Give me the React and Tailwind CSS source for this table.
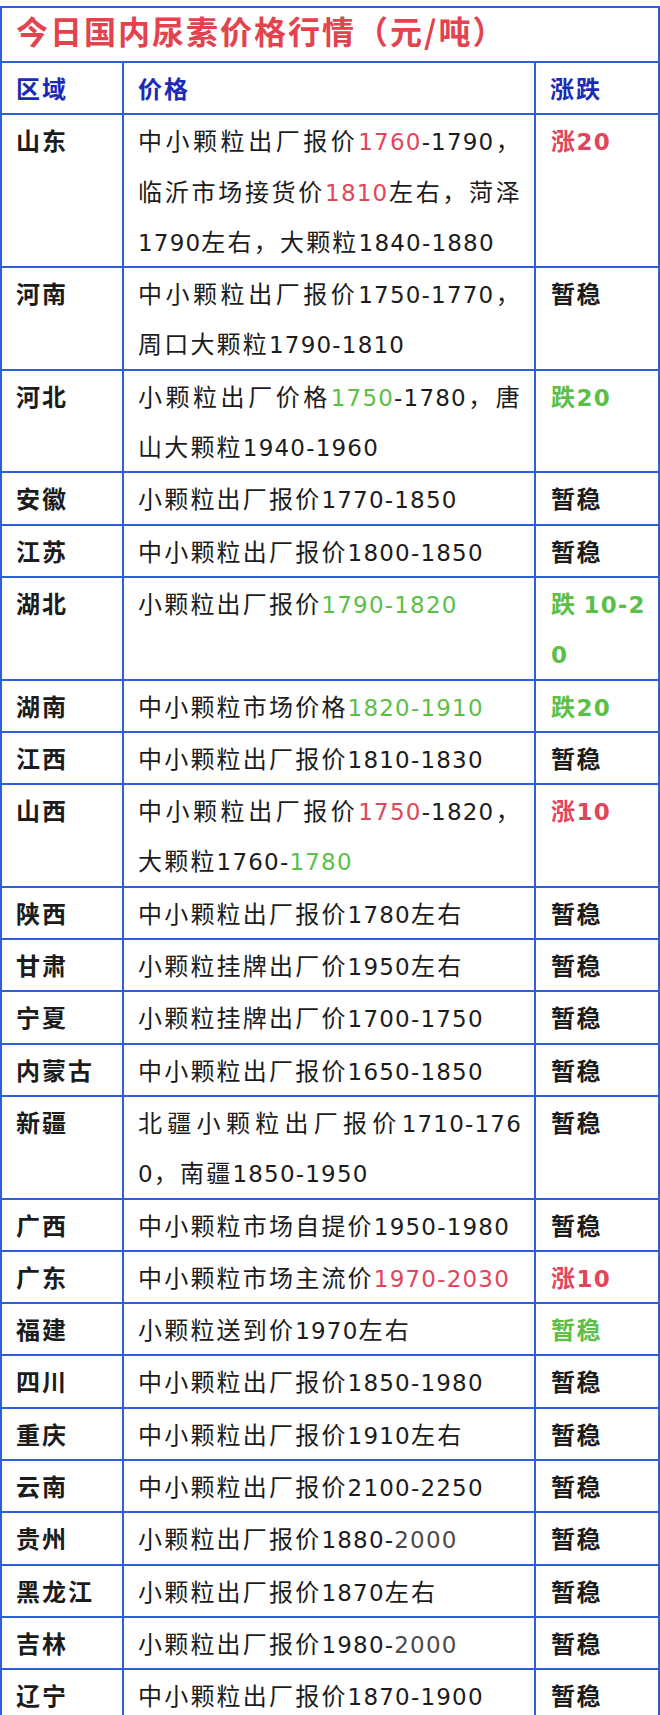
// 今日国内尿素价格行情表

const R = 'r';
const G = 'g';
const D = 'd';

const ROWS = [
  {
    area: '山东',
    lines: [
      ['中小颗粒出厂报价', [R, '1760'], '-1790，'],
      ['临沂市场接货价', [R, '1810'], '左右，菏泽'],
      ['1790左右，大颗粒1840-1880'],
    ],
    change: ['涨20'],
    tone: R,
  },
  {
    area: '河南',
    lines: [['中小颗粒出厂报价1750-1770，'], ['周口大颗粒1790-1810']],
    change: ['暂稳'],
  },
  {
    area: '河北',
    lines: [['小颗粒出厂价格', [G, '1750'], '-1780，唐'], ['山大颗粒1940-1960']],
    change: ['跌20'],
    tone: G,
  },
  { area: '安徽', lines: [['小颗粒出厂报价1770-1850']], change: ['暂稳'] },
  { area: '江苏', lines: [['中小颗粒出厂报价1800-1850']], change: ['暂稳'] },
  {
    area: '湖北',
    lines: [['小颗粒出厂报价', [G, '1790-1820']], ['']],
    change: ['跌 10-2', '0'],
    tone: G,
  },
  { area: '湖南', lines: [['中小颗粒市场价格', [G, '1820-1910']]], change: ['跌20'], tone: G },
  { area: '江西', lines: [['中小颗粒出厂报价1810-1830']], change: ['暂稳'] },
  {
    area: '山西',
    lines: [['中小颗粒出厂报价', [R, '1750'], '-1820，'], ['大颗粒1760-', [G, '1780']]],
    change: ['涨10'],
    tone: R,
  },
  { area: '陕西', lines: [['中小颗粒出厂报价1780左右']], change: ['暂稳'] },
  { area: '甘肃', lines: [['小颗粒挂牌出厂价1950左右']], change: ['暂稳'] },
  { area: '宁夏', lines: [['小颗粒挂牌出厂价1700-1750']], change: ['暂稳'] },
  { area: '内蒙古', lines: [['中小颗粒出厂报价1650-1850']], change: ['暂稳'] },
  {
    area: '新疆',
    lines: [['北疆小颗粒出厂报价1710-176'], ['0，南疆1850-1950']],
    change: ['暂稳'],
  },
  { area: '广西', lines: [['中小颗粒市场自提价1950-1980']], change: ['暂稳'] },
  { area: '广东', lines: [['中小颗粒市场主流价', [R, '1970-2030']]], change: ['涨10'], tone: R },
  { area: '福建', lines: [['小颗粒送到价1970左右']], change: ['暂稳'], tone: G },
  { area: '四川', lines: [['中小颗粒出厂报价1850-1980']], change: ['暂稳'] },
  { area: '重庆', lines: [['中小颗粒出厂报价1910左右']], change: ['暂稳'] },
  { area: '云南', lines: [['中小颗粒出厂报价2100-2250']], change: ['暂稳'] },
  { area: '贵州', lines: [['小颗粒出厂报价1880-', [D, '2000']]], change: ['暂稳'] },
  { area: '黑龙江', lines: [['小颗粒出厂报价1870左右']], change: ['暂稳'] },
  { area: '吉林', lines: [['小颗粒出厂报价1980-', [D, '2000']]], change: ['暂稳'] },
  { area: '辽宁', lines: [['中小颗粒出厂报价1870-1900']], change: ['暂稳'] },
];

const TONE = {
  r: 'text-[#e2455a]',
  g: 'text-[#5cbf48]',
  d: 'text-[#4a4a4a]',
};

// 숫자 구간은 폭이 넓은 글꼴로
function Digits({ text }) {
  return text.split(/([0-9-]+)/).map((s, i) =>
    /^[0-9-]+$/.test(s) ? (
      <span key={i} className="font-['DejaVu_Sans',sans-serif] text-[23px] leading-none tracking-[1.2px]">
        {s}
      </span>
    ) : (
      <span key={i}>{s}</span>
    )
  );
}

function Line({ parts, justify }) {
  const empty = parts.length === 1 && parts[0] === '';
  return (
    <div className={justify ? 'text-justify [text-align-last:justify]' : ''}>
      {parts.map((p, i) =>
        Array.isArray(p) ? (
          <span key={i} className={TONE[p[0]]}>
            <Digits text={p[1]} />
          </span>
        ) : (
          <Digits key={i} text={p} />
        )
      )}
      {empty ? '\u00a0' : null}
    </div>
  );
}

export default function App() {
  return (
    <div
      className="h-[1715px] w-[660px] overflow-hidden bg-white pt-[6px]"
      style={{ fontFamily: '"Noto Sans CJK SC", "Noto Sans", sans-serif' }}
    >
      <div className="w-[660px] border-x-2 border-t-2 border-[#2d5fd8]">
        <div className="border-b-2 border-[#2d5fd8] pb-2 pl-[14px] text-[32px] font-bold leading-[45px] tracking-[2px] text-[#e3434f]">
          今日国内尿素价格行情（元/吨）
        </div>
        <div className="grid grid-cols-[122px_412px_1fr] border-b-2 border-[#2d5fd8] text-[24px] font-bold leading-[50.3px] tracking-[2px] text-[#1b2bb8]">
          <div className="border-r-2 border-[#2d5fd8] pl-[14px]">区域</div>
          <div className="border-r-2 border-[#2d5fd8] pl-[14px]">价格</div>
          <div className="pl-[14px]">涨跌</div>
        </div>
        {ROWS.map((row, i) => (
          <div
            key={i}
            className="grid grid-cols-[122px_412px_1fr] border-b-2 border-[#2d5fd8] text-[24px] leading-[50.3px] text-[#1c1c1c]"
          >
            <div className="border-r-2 border-[#2d5fd8] pl-[14px] font-bold tracking-[2px]">{row.area}</div>
            <div className="border-r-2 border-[#2d5fd8] pl-[14px] pr-[12px] tracking-[2.2px]">
              {row.lines.map((parts, j) => {
                const next = row.lines[j + 1];
                const justify = !!next && !(next.length === 1 && next[0] === '');
                return <Line key={j} parts={parts} justify={justify} />;
              })}
            </div>
            <div className={`pl-[15px] font-bold tracking-[1.5px] ${row.tone ? TONE[row.tone] : ''}`}>
              {row.change.map((c, j) => (
                <div key={j} className="whitespace-pre">
                  <Digits text={c} />
                </div>
              ))}
            </div>
          </div>
        ))}
      </div>
    </div>
  );
}
